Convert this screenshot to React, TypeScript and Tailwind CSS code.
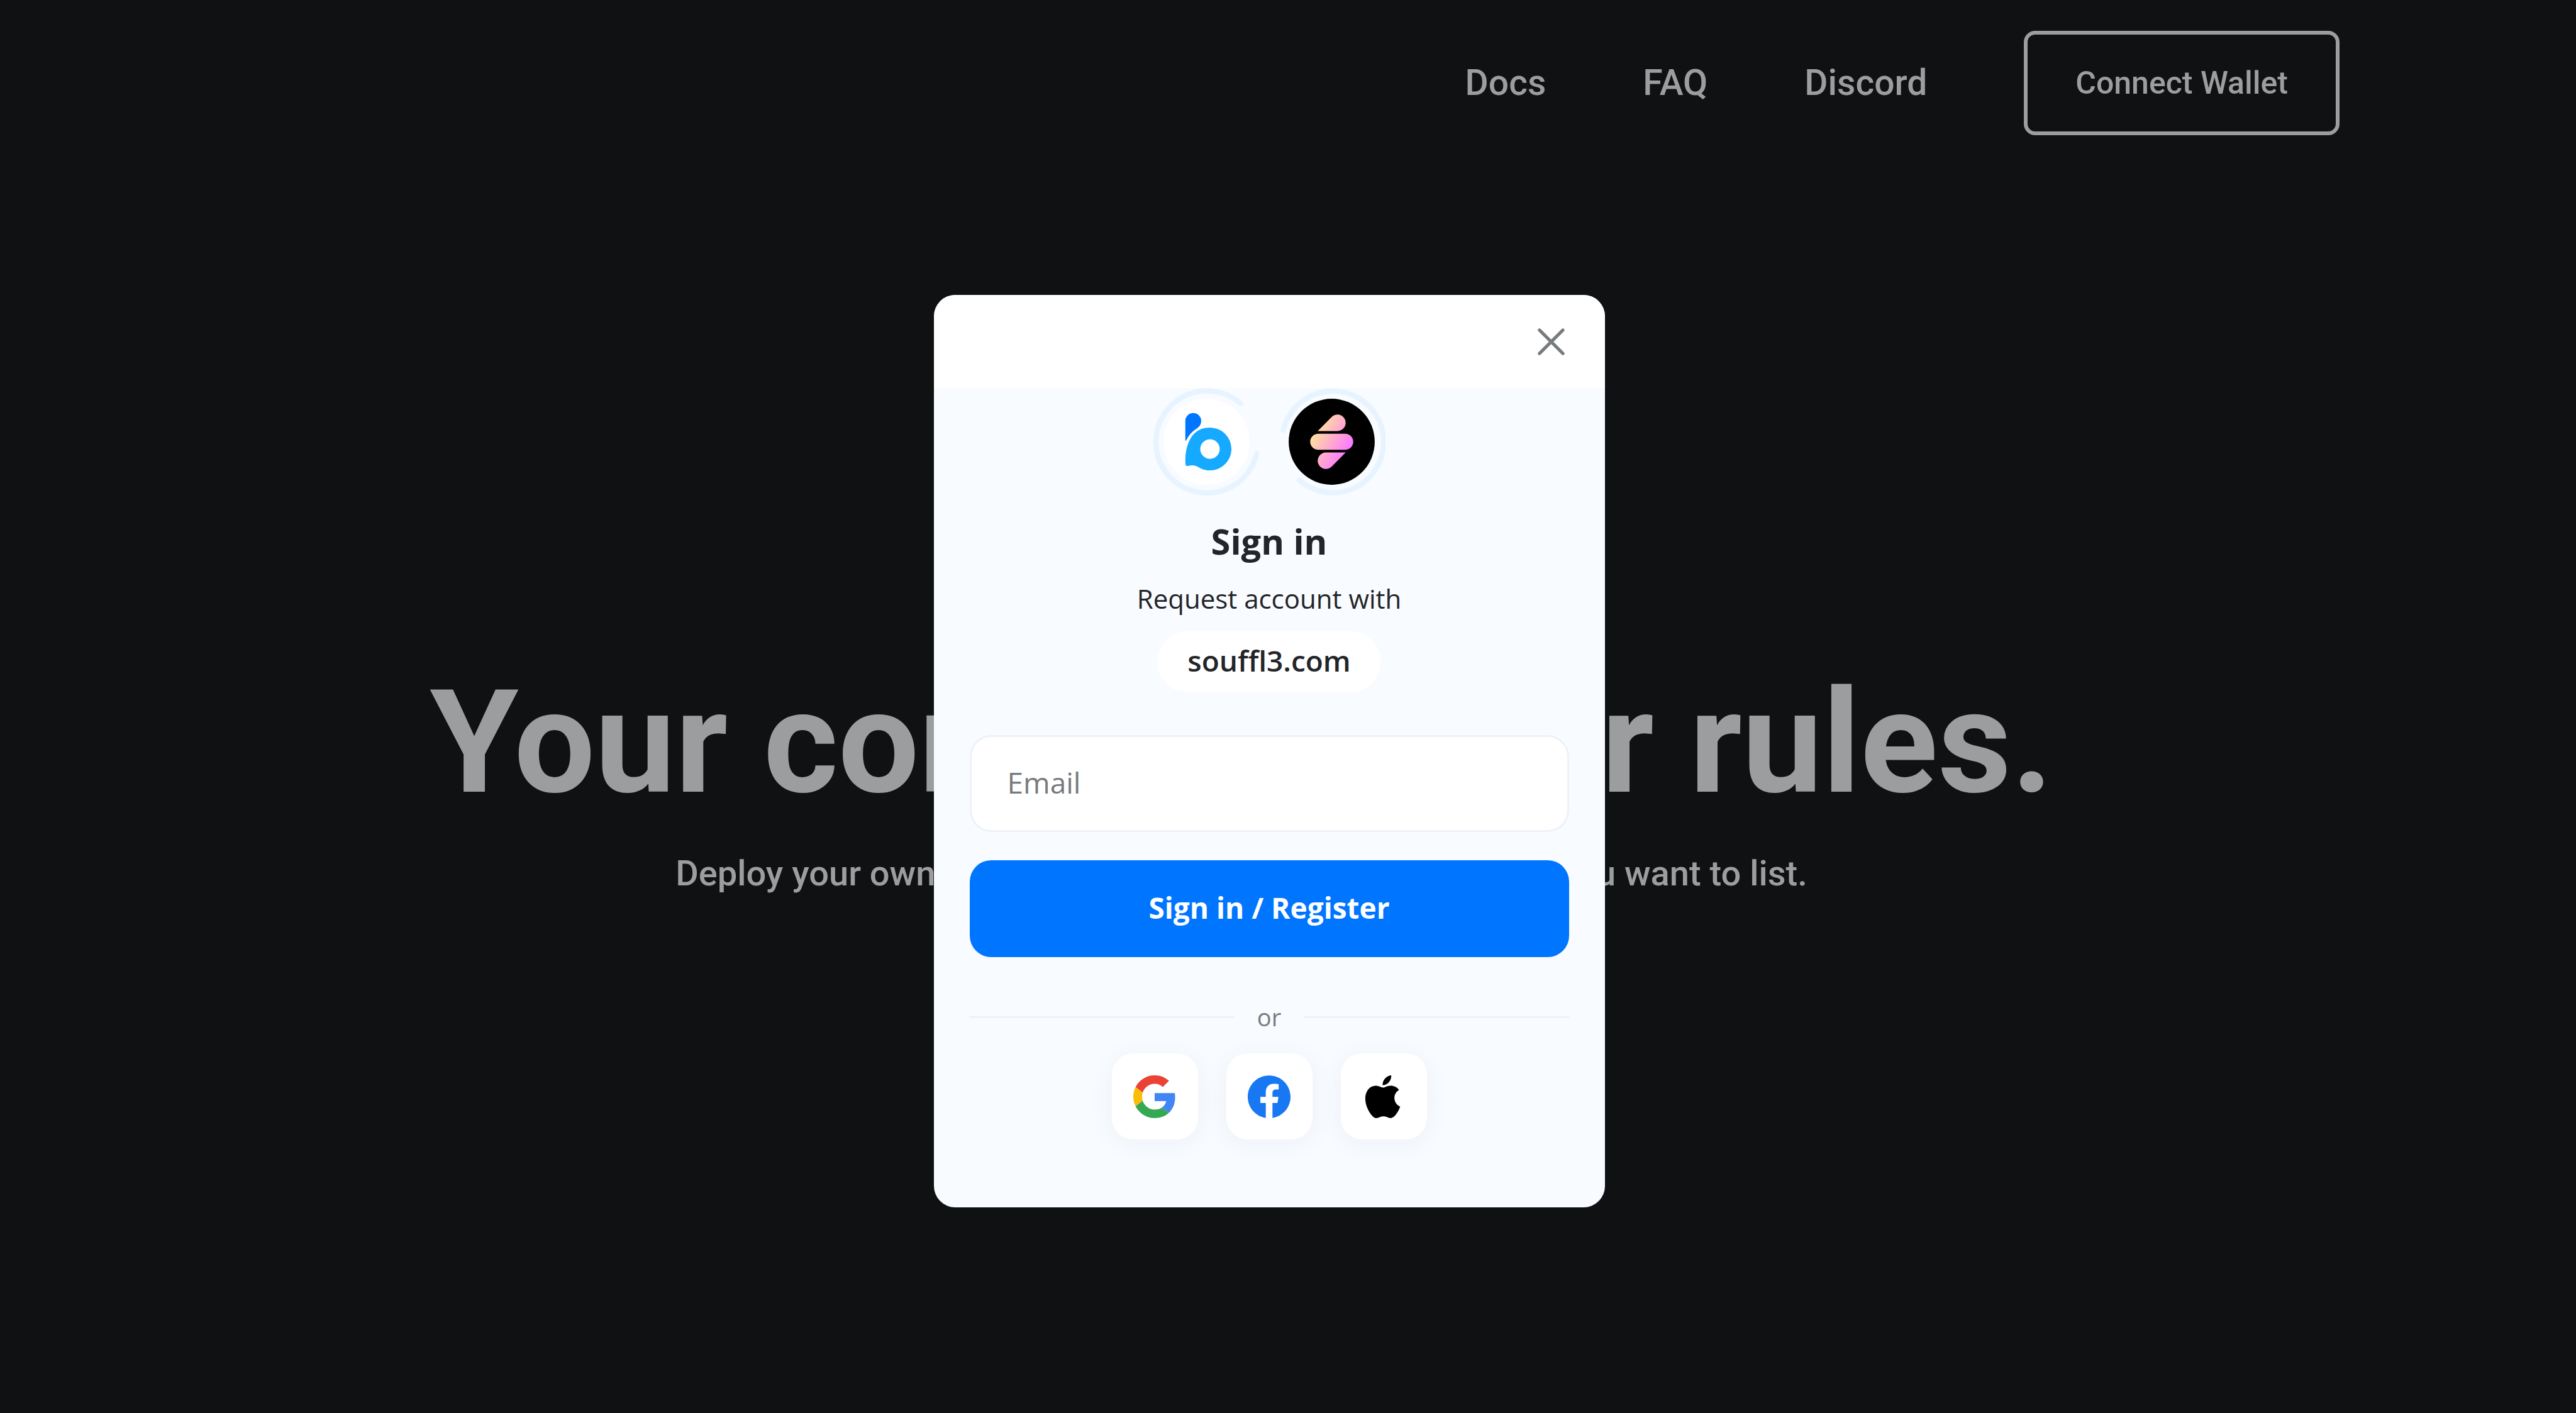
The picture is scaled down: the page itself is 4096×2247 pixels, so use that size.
import React from "react";

function BloctoLogo() {
  return (
    <svg viewBox="0 0 240 240" className="size-[171px]" role="img" aria-label="Blocto">
      <path d="M196 34.5A114 114 0 1 0 232 146" fill="none" stroke="#e7f4ff" strokeWidth="12" strokeLinecap="round" />
      <circle cx="120" cy="120" r="96" fill="#fff" />
      <path
        d="M72.6 73.5A17.7 17.7 0 0 1 108 73.5C108 80 105 86 99.5 89.3C88 96.5 81.5 103.5 74.8 116.4C74 118.2 72.6 118.2 72.6 116.4Z"
        fill="#0075ff"
      />
      <path
        fillRule="evenodd"
        d="M127.7 88.3A47.8 47.8 0 0 1 127.7 184C118 184 110 181.5 102 176.8C95 172.6 88 171.8 78.5 173.9C75 174.6 73 172.6 72.8 169C71.8 146 76 126.5 84 113C92.5 98 108 88.3 127.7 88.3ZM127.7 114.5A21.8 21.8 0 1 0 127.7 158.1A21.8 21.8 0 1 0 127.7 114.5Z"
        fill="#15a9ff"
      />
    </svg>
  );
}

function SouffleLogo() {
  return (
    <svg viewBox="0 0 240 240" className="size-[171px]" role="img" aria-label="Souffl3">
      <defs>
        <linearGradient id="souffle" gradientUnits="userSpaceOnUse" x1="78" y1="98" x2="156" y2="144">
          <stop offset="0" stopColor="#ffe59a" />
          <stop offset="0.5" stopColor="#ffadcc" />
          <stop offset="1" stopColor="#fb78ff" />
        </linearGradient>
      </defs>
      <path d="M12 94A113.5 113.5 0 1 1 48 206" fill="none" stroke="#e7f4ff" strokeWidth="12" strokeLinecap="round" />
      <circle cx="120" cy="120" r="96" fill="#000" />
      <g fill="url(#souffle)">
        <path d="M88.8 96L119 65.5A18.4 18.4 0 1 1 132 96Z" />
        <rect x="72" y="102" width="96" height="36" rx="18" />
        <path d="M151.2 144L121 174.5A18.4 18.4 0 1 1 108 144Z" />
      </g>
    </svg>
  );
}

function GoogleIcon() {
  return (
    <svg viewBox="0 0 48 48" className="size-[68px]" aria-hidden="true">
      <path fill="#EA4335" d="M24 9.5c3.54 0 6.71 1.22 9.21 3.6l6.85-6.85C35.9 2.38 30.47 0 24 0 14.62 0 6.51 5.38 2.56 13.22l7.98 6.19C12.43 13.72 17.74 9.5 24 9.5z" />
      <path fill="#4285F4" d="M46.98 24.55c0-1.57-.15-3.09-.38-4.55H24v9.02h12.94c-.58 2.96-2.26 5.48-4.78 7.18l7.73 6c4.51-4.18 7.09-10.36 7.09-17.65z" />
      <path fill="#FBBC05" d="M10.53 28.59c-.48-1.45-.76-2.99-.76-4.59s.27-3.14.76-4.59l-7.98-6.19C.92 16.46 0 20.12 0 24c0 3.88.92 7.54 2.56 10.78l7.97-6.19z" />
      <path fill="#34A853" d="M24 48c6.48 0 11.93-2.13 15.89-5.81l-7.73-6c-2.15 1.45-4.92 2.3-8.16 2.3-6.26 0-11.57-4.22-13.47-9.91l-7.98 6.19C6.51 42.62 14.62 48 24 48z" />
    </svg>
  );
}

function FacebookIcon() {
  return (
    <svg viewBox="0 0 24 24" className="size-[68px]" aria-hidden="true">
      <path fill="#1877F2" d="M24 12.073c0-6.627-5.373-12-12-12s-12 5.373-12 12c0 5.99 4.388 10.954 10.125 11.854v-8.385H7.078v-3.47h3.047V9.43c0-3.007 1.792-4.669 4.533-4.669 1.312 0 2.686.235 2.686.235v2.953H15.83c-1.491 0-1.956.925-1.956 1.874v2.25h3.328l-.532 3.47h-2.796v8.385C19.612 23.027 24 18.062 24 12.073z" />
    </svg>
  );
}

function AppleIcon() {
  return (
    <svg viewBox="0 0 24 24" className="size-[68px]" aria-hidden="true">
      <path
        transform="translate(-0.5 0)"
        d="M12.152 6.896c-.948 0-2.415-1.078-3.96-1.04-2.04.027-3.91 1.183-4.961 3.014-2.117 3.675-.546 9.103 1.519 12.09 1.013 1.454 2.208 3.09 3.792 3.039 1.52-.065 2.09-.987 3.935-.987 1.831 0 2.35.987 3.96.948 1.637-.026 2.676-1.48 3.676-2.948 1.156-1.688 1.636-3.325 1.662-3.415-.039-.013-3.182-1.221-3.22-4.857-.026-3.04 2.48-4.494 2.597-4.559-1.429-2.09-3.623-2.324-4.39-2.376-2-.156-3.675 1.09-4.61 1.09zM15.53 3.83c.843-1.012 1.4-2.427 1.245-3.83-1.207.052-2.662.805-3.532 1.818-.78.896-1.454 2.338-1.273 3.714 1.338.104 2.715-.688 3.559-1.701"
      />
    </svg>
  );
}

const providers = [
  { name: "Google", Icon: GoogleIcon },
  { name: "Facebook", Icon: FacebookIcon },
  { name: "Apple", Icon: AppleIcon },
];

function SignInDialog() {
  return (
    <div className="fixed inset-0 flex items-center justify-center pt-[142px] pr-[60px]">
      <div
        role="dialog"
        aria-modal="true"
        aria-labelledby="dialog-title"
        className="w-full max-w-[1067px] overflow-hidden rounded-[34px] bg-[#f8fbff] font-['Open_Sans',sans-serif] text-[#232528]"
      >
        <div className="flex h-[148px] items-center justify-end bg-white px-16">
          <button type="button" aria-label="Close">
            <svg viewBox="0 0 60 60" className="size-[43px]" fill="none" stroke="#777b7e" strokeWidth="7" strokeLinecap="round">
              <path d="M4 4L56 56M56 4L4 56" />
            </svg>
          </button>
        </div>
        <div className="flex flex-col items-center px-[57px] pb-[108px]">
          <div className="flex gap-7">
            <BloctoLogo />
            <SouffleLogo />
          </div>
          <h2 id="dialog-title" className="mt-9 text-[56px] leading-[72px] font-bold">
            Sign in
          </h2>
          <p className="mt-[26px] text-[42px] leading-[60px]">Request account with</p>
          <p className="mt-[22px] flex h-[97px] items-center rounded-full bg-white px-12 pb-1.5 text-[46px] leading-[60px] font-semibold">
            souffl3.com
          </p>
          <form className="mt-[68px] flex w-full flex-col gap-[45px]" onSubmit={(e) => e.preventDefault()}>
            <input
              type="email"
              aria-label="Email"
              placeholder="Email"
              className="h-[154px] w-full rounded-[34px] border-[3px] border-[#eef2f7] bg-white px-[57px] pb-1 text-[46px] outline-none placeholder:text-[#777b7e]"
            />
            <button type="submit" className="h-[154px] w-full rounded-[34px] bg-[#0075ff] pb-1 text-[46px] leading-[60px] font-bold text-white">
              Sign in / Register
            </button>
          </form>
          <div className="mt-[65px] flex w-full items-center text-[38px] leading-[60px] text-[#777b7e]">
            <span className="h-[3px] flex-1 bg-[#eef2f7]" />
            <span className="w-[110px] text-center">or</span>
            <span className="h-[3px] flex-1 bg-[#eef2f7]" />
          </div>
          <div className="mt-7 flex gap-[45px]">
            {providers.map(({ name, Icon }) => (
              <button
                key={name}
                type="button"
                aria-label={name}
                className="flex size-[137px] items-center justify-center rounded-[34px] bg-white shadow-[0_6px_42px_rgba(35,50,110,0.05)]"
              >
                <Icon />
              </button>
            ))}
          </div>
        </div>
      </div>
    </div>
  );
}

export default function App() {
  return (
    <div className="min-h-screen bg-[#101113] font-['Roboto',sans-serif] text-[#9c9d9f]">
      <header className="flex items-center justify-end pt-[49px] pr-[376px]">
        <nav className="flex items-center gap-[154px] text-[57px] leading-[80px] font-medium">
          <a href="#docs">Docs</a>
          <a href="#faq">FAQ</a>
          <a href="#discord">Discord</a>
          <button type="button" className="h-[166px] rounded-[18px] border-[6px] border-[#9c9d9f] px-[76px] text-[50px]">
            Connect Wallet
          </button>
        </nav>
      </header>
      <main className="pt-[866px] pr-[148px] text-center">
        <h1 className="text-[228px] leading-[200px] font-bold whitespace-nowrap">Your contract, your rules.</h1>
        <p className="mt-[68px] text-[56px] leading-[80px] font-medium whitespace-nowrap">
          Deploy your own marketplace and select the collections you want to list.
        </p>
      </main>
      <SignInDialog />
    </div>
  );
}
